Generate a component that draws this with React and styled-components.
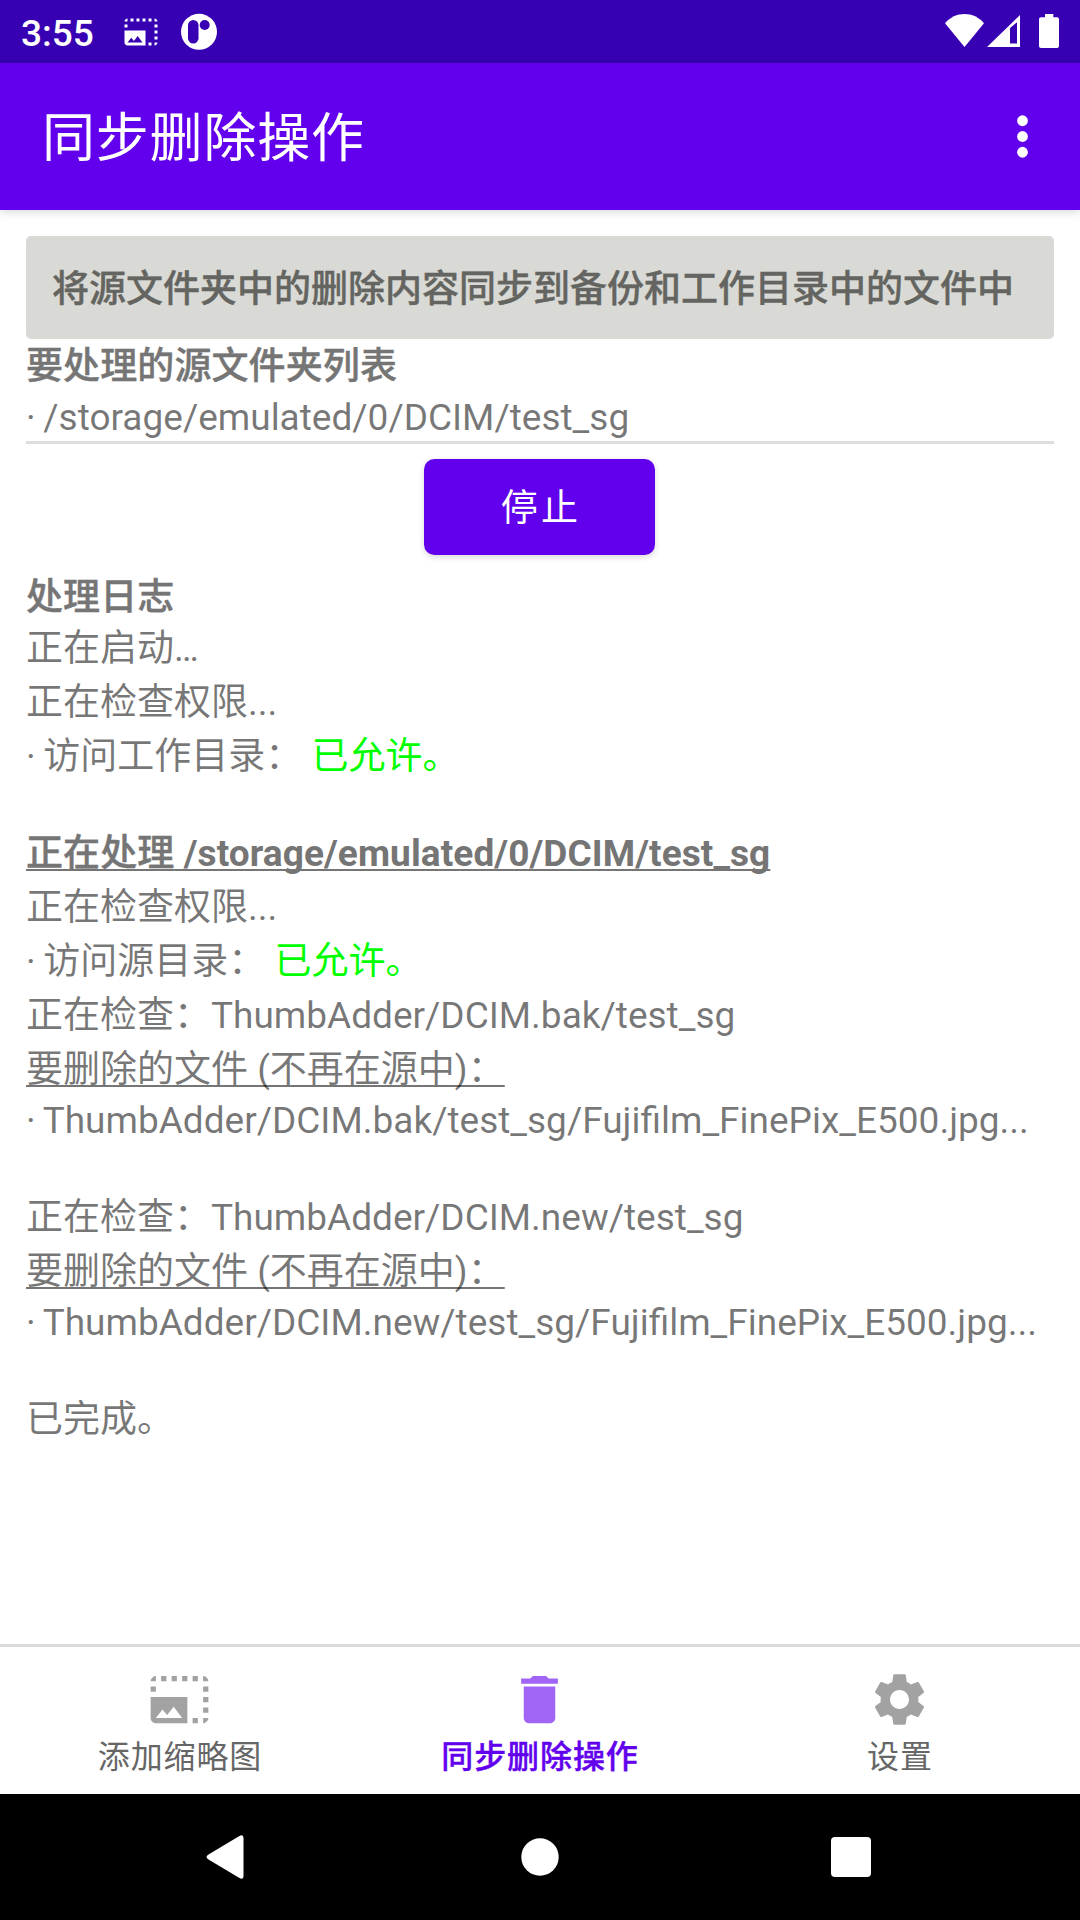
import React from "react";
import styled, { createGlobalStyle, css } from "styled-components";

const purple = "#6200ee";
const bodyText = "rgba(0, 0, 0, 0.54)";

const GlobalStyle = createGlobalStyle`
  * { box-sizing: border-box; }
  html, body { margin: 0; padding: 0; background: #fff; }
  body { font-family: Roboto, "Noto Sans CJK SC", sans-serif; }
`;

const Screen = styled.div`
  width: 1080px;
  height: 1920px;
  display: flex;
  flex-direction: column;
  overflow: hidden;
  background: #fff;
  color: ${bodyText};
  font-size: 37px;
`;

const StatusBar = styled.header`
  flex: none;
  height: 63px;
  display: flex;
  justify-content: space-between;
  background: #3700b3;
  color: #fff;
`;

const StatusGroup = styled.div`
  display: flex;
  align-items: flex-start;
`;

const Clock = styled.span`
  width: 123px;
  padding-left: 21px;
  font-weight: 500;
  line-height: 67px;
`;

const Glyph = styled.svg`
  display: block;
  flex: none;
  fill: currentColor;
  width: ${(p) => p.$w}px;
  height: ${(p) => p.$h || p.$w}px;
  margin-top: ${(p) => p.$top || 0}px;
  margin-left: ${(p) => p.$left || 0}px;
`;

const AppBar = styled.div`
  flex: none;
  height: 147px;
  display: flex;
  align-items: center;
  justify-content: space-between;
  padding: 0 26px 0 42px;
  background: ${purple};
  color: #fff;
  box-shadow: 0 2px 9px rgba(0, 0, 0, 0.16);
`;

const Title = styled.h1`
  margin: 0;
  padding-top: 5px;
  font-size: 53px;
  font-weight: 400;
  letter-spacing: 0.8px;
  line-height: 74px;
`;

const Content = styled.main`
  flex: 1;
  min-height: 0;
  padding: 26px 26px 0;
`;

const Banner = styled.div`
  height: 103px;
  padding: 0 26px 3px;
  display: flex;
  align-items: center;
  border-radius: 5px;
  background: #d9dad5;
  color: #646461;
  white-space: nowrap;
`;

const Line = styled.p`
  margin: ${(p) => p.$before || 0}px 0 0;
  line-height: ${(p) => p.$height || 54}px;
  white-space: nowrap;
  ${(p) =>
    p.$bold &&
    css`
      font-weight: 700;
      color: #757575;
      letter-spacing: 0.1px;
    `}
`;

const Medium = styled.span`
  font-weight: 500;
  -webkit-text-stroke: 0.4px currentColor;
`;

const Bullet = styled.span`
  margin-right: -1.5px;
`;

const Underlined = styled.span`
  text-decoration: underline;
  text-decoration-color: ${bodyText};
  text-decoration-thickness: 2px;
  text-underline-offset: 3px;
  text-decoration-skip-ink: none;
`;

const Allowed = styled.span`
  color: #00ff00;
`;

const Rule = styled.hr`
  margin: 2px 0 15px;
  height: 3px;
  border: 0;
  background: #dedede;
`;

const StopButton = styled.button`
  display: block;
  margin: 0 0 16px calc(50% - 116px);
  width: 231px;
  height: 96px;
  padding: 0 0 4px 3px;
  border: 0;
  border-radius: 10.5px;
  background: ${purple};
  color: #fff;
  font: inherit;
  letter-spacing: 3.28px;
  box-shadow: 0 2px 6px rgba(0, 0, 0, 0.16);
`;

const Tabs = styled.nav`
  flex: none;
  height: 150px;
  display: grid;
  grid-template-columns: repeat(3, 1fr);
  border-top: 3px solid #dadada;
`;

const Tab = styled.a`
  display: flex;
  flex-direction: column;
  align-items: center;
  padding-top: 21px;
  color: ${(p) => (p.$active ? purple : "#666")};
`;

const TabIcon = styled(Glyph)`
  margin-right: 1.5px;
  opacity: 0.6;
`;

const TabLabel = styled.span`
  margin-top: 5px;
  font-size: 32px;
  line-height: 42px;
  letter-spacing: 0.9px;
  ${(p) =>
    p.$active &&
    css`
      font-weight: 500;
      -webkit-text-stroke: 0.4px currentColor;
    `}
`;

const SystemNav = styled.footer`
  flex: none;
  height: 126px;
  display: flex;
  align-items: center;
  justify-content: center;
  gap: 249px;
  background: #000;
  color: #fff;
`;

const thumbPath =
  "M21 15h2v2h-2v-2zm0-4h2v2h-2v-2zm2 8h-2v2c1 0 2-1 2-2zM13 3h2v2h-2V3zm8 4h2v2h-2V7zm0-4v2h2c0-1-1-2-2-2zM1 7h2v2H1V7zm16-4h2v2h-2V3zm0 16h2v2h-2v-2zM3 3C2 3 1 4 1 5h2V3zm6 0h2v2H9V3zM5 3h2v2H5V3zm-4 8v8c0 1.1.9 2 2 2h12V11H1zm2 8l2.5-3.21 1.79 2.15 2.5-3.22L13 19H3z";
const trashPath =
  "M6 19c0 1.1.9 2 2 2h8c1.1 0 2-.9 2-2V7H6v12zM19 4h-3.5l-1-1h-5l-1 1H5v2h14V4z";
const gearPath =
  "M19.14 12.94c.04-.3.06-.61.06-.94 0-.32-.02-.64-.07-.94l2.03-1.58c.18-.14.23-.41.12-.61l-1.92-3.32c-.12-.22-.37-.29-.59-.22l-2.39.96c-.5-.38-1.03-.7-1.62-.94l-.36-2.54c-.04-.24-.24-.41-.48-.41h-3.84c-.24 0-.43.17-.47.41l-.36 2.54c-.59.24-1.13.57-1.62.94l-2.39-.96c-.22-.08-.47 0-.59.22L2.74 8.87c-.12.21-.08.47.12.61l2.03 1.58c-.05.3-.09.63-.09.94s.02.64.07.94l-2.03 1.58c-.18.14-.23.41-.12.61l1.92 3.32c.12.22.37.29.59.22l2.39-.96c.5.38 1.03.7 1.62.94l.36 2.54c.05.24.24.41.48.41h3.84c.24 0 .44-.17.47-.41l.36-2.54c.59-.24 1.13-.56 1.62-.94l2.39.96c.22.08.47 0 .59-.22l1.92-3.32c.12-.22.07-.47-.12-.61l-2.01-1.58zM12 15.6c-1.98 0-3.6-1.62-3.6-3.6s1.62-3.6 3.6-3.6 3.6 1.62 3.6 3.6-1.62 3.6-3.6 3.6z";

const tabs = [
  { label: "添加缩略图", path: thumbPath },
  { label: "同步删除操作", path: trashPath, active: true },
  { label: "设置", path: gearPath },
];

export default function App() {
  return (
    <>
      <GlobalStyle />
      <Screen>
        <StatusBar>
          <StatusGroup>
            <Clock>3:55</Clock>
            <Glyph $w={36} $top={13.5} viewBox="0 0 24 24">
              <path d={thumbPath} />
            </Glyph>
            <Glyph $w={38} $top={13} $left={21} viewBox="0 0 38 38">
              <circle cx="19" cy="18.8" r="18" />
              <rect x="8" y="7" width="10.5" height="23.5" rx="5.25" fill="#3700b3" />
              <circle cx="24.7" cy="12" r="5" fill="#3700b3" />
            </Glyph>
          </StatusGroup>
          <StatusGroup>
            <Glyph $w={39} $h={33} $top={14} viewBox="0 0 39 33">
              <path d="M0 9.2C5.2 3.2 12 0 19.5 0S33.8 3.2 39 9.2L19.5 33z" />
            </Glyph>
            <Glyph $w={33} $h={32} $top={15} $left={3} viewBox="0 0 33 32">
              <path fillRule="evenodd" d="M33 0v32H0zM23 13v15.6h7V7.2z" />
            </Glyph>
            <Glyph $w={41} $h={34} $top={14} $left={19} viewBox="0 0 41 34">
              <path d="M6 0h8.3v3.3H18a2 2 0 0 1 2 2V32a2 2 0 0 1-2 2H2a2 2 0 0 1-2-2V5.3a2 2 0 0 1 2-2h4z" />
            </Glyph>
          </StatusGroup>
        </StatusBar>

        <AppBar>
          <Title>同步删除操作</Title>
          <Glyph $w={63} viewBox="0 0 24 24">
            <circle cx="12" cy="6" r="2.05" />
            <circle cx="12" cy="12" r="2.05" />
            <circle cx="12" cy="18" r="2.05" />
          </Glyph>
        </AppBar>

        <Content>
          <Banner>
            <Medium>将源文件夹中的删除内容同步到备份和工作目录中的文件中</Medium>
          </Banner>
          <Line $bold $before={1}>
            <Medium>要处理的源文件夹列表</Medium>
          </Line>
          <Line $height={43} $before={2}>
            <Bullet>·</Bullet> /storage/emulated/0/DCIM/test_sg
          </Line>
          <Rule />
          <StopButton>停止</StopButton>
          <Line $bold>
            <Medium>处理日志</Medium>
          </Line>
          <Line $before={-3}>正在启动…</Line>
          <Line>正在检查权限...</Line>
          <Line>
            <Bullet>·</Bullet> 访问工作目录： <Allowed>已允许。</Allowed>
          </Line>
          <Line $bold $before={43}>
            <Underlined>
              <Medium>正在处理</Medium> /storage/emulated/0/DCIM/test_sg
            </Underlined>
          </Line>
          <Line>正在检查权限...</Line>
          <Line>
            <Bullet>·</Bullet> 访问源目录： <Allowed>已允许。</Allowed>
          </Line>
          <Line>正在检查：ThumbAdder/DCIM.bak/test_sg</Line>
          <Line>
            <Underlined>要删除的文件 (不再在源中)：</Underlined>
          </Line>
          <Line $before={-3}>
            <Bullet>·</Bullet> ThumbAdder/DCIM.bak/test_sg/Fujifilm_FinePix_E500.jpg...
          </Line>
          <Line $before={43}>正在检查：ThumbAdder/DCIM.new/test_sg</Line>
          <Line>
            <Underlined>要删除的文件 (不再在源中)：</Underlined>
          </Line>
          <Line $before={-3}>
            <Bullet>·</Bullet> ThumbAdder/DCIM.new/test_sg/Fujifilm_FinePix_E500.jpg...
          </Line>
          <Line $before={43}>已完成。</Line>
        </Content>

        <Tabs>
          {tabs.map((t) => (
            <Tab key={t.label} $active={t.active}>
              <TabIcon $w={63} viewBox="0 0 24 24">
                <path d={t.path} />
              </TabIcon>
              <TabLabel $active={t.active}>{t.label}</TabLabel>
            </Tab>
          ))}
        </Tabs>

        <SystemNav>
          <Glyph $w={75} $h={44} viewBox="0 0 75 44">
            <path
              transform="translate(8.5 0)"
              d="M33.5 1.2Q38-1.5 38 3V41Q38 45.5 33.5 42.8L3 24.5Q-1 22 3 19.5z"
            />
          </Glyph>
          <Glyph $w={38} viewBox="0 0 38 38">
            <circle cx="19" cy="19" r="18.7" />
          </Glyph>
          <Glyph $w={75} $h={40} viewBox="0 0 75 40">
            <rect x="23" width="40" height="40" rx="4" />
          </Glyph>
        </SystemNav>
      </Screen>
    </>
  );
}
